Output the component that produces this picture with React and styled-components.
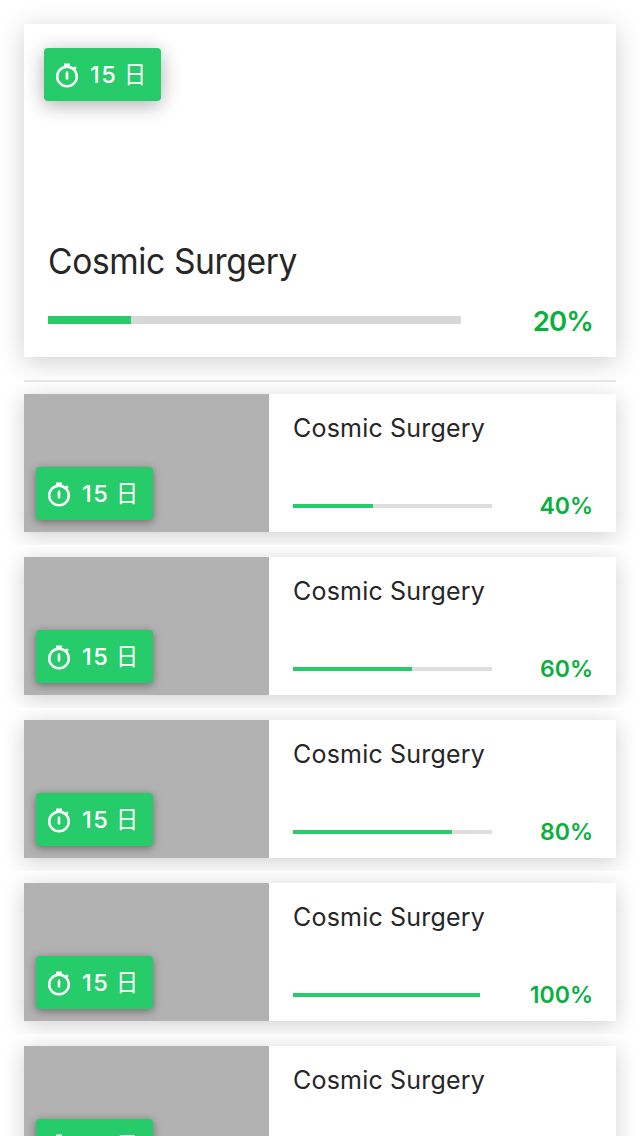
import React from "react";
import styled, { createGlobalStyle } from "styled-components";

const GlobalStyle = createGlobalStyle`
  * { box-sizing: border-box; }
  html, body { margin: 0; background: #fff; }
  body { font-family: Inter, "Noto Sans CJK SC", sans-serif; color: #262626; }
`;

const Screen = styled.main`
  width: 640px;
  height: 1136px;
  overflow: hidden;
  background: #fff;
`;

const Header = styled.header`
  height: 382px;
  padding: 24px 24px 0;
  display: flex;
  flex-direction: column;
  justify-content: space-between;
  overflow: hidden;
`;

const Divider = styled.div`
  height: 2px;
  background: #e6e6e6;
`;

const FeatureCard = styled.article`
  height: 333px;
  padding: 24px 24px 21px;
  display: flex;
  flex-direction: column;
  background: #fff;
  box-shadow: 0 5px 25px rgba(0, 0, 0, 0.19);
`;

const FeatureTitle = styled.h1`
  margin: auto 0 20px;
  font-size: 35.5px;
  line-height: 44px;
  font-weight: 400;
  letter-spacing: -0.4px;
  transform: scaleX(0.946);
  transform-origin: left;
`;

const Badge = styled.div`
  width: 117px;
  height: 53px;
  flex: none;
  display: flex;
  align-items: center;
  padding-left: 11px;
  margin-left: ${({ $featured }) => ($featured ? "-4px" : "0")};
  border-radius: 4px;
  background: #26cc69;
  color: #fff;
  box-shadow: ${({ $featured }) =>
    $featured ? "0 4px 20px rgba(0, 0, 0, 0.32)" : "0 2px 8px rgba(0, 0, 0, 0.4)"};
`;

const TimerIcon = styled.svg`
  width: 24px;
  height: 26px;
  flex: none;
  margin: 0 11px 0 0;
`;

const Remaining = styled.span`
  display: flex;
  align-items: center;
  gap: 6px;
  font-size: 23.5px;
  font-weight: 500;
  line-height: 28px;
  letter-spacing: 1.5px;
`;

const Day = styled.span`
  font-family: "Noto Sans CJK SC", sans-serif;
  font-size: 24px;
  font-weight: 400;
  line-height: 28px;
  padding-bottom: 4px;
  transform: scaleX(0.92);
`;

const ProgressRow = styled.div`
  display: flex;
  align-items: center;
  justify-content: space-between;
  height: 32px;
`;

const Track = styled.div`
  width: ${({ $width }) => $width}px;
  height: ${({ $featured }) => ($featured ? 8 : 4)}px;
  background: ${({ $featured }) => ($featured ? "#d8d8d8" : "#dedede")};
`;

const Fill = styled.div`
  height: 100%;
  background: #26cc69;
`;

const Percent = styled.span`
  color: #08b03e;
  font-size: ${({ $featured }) => ($featured ? 27.5 : 23)}px;
  font-weight: 600;
  line-height: 32px;
  letter-spacing: ${({ $featured }) => ($featured ? -0.9 : 0)}px;
  margin-right: -1px;
  padding-top: ${({ $featured }) => ($featured ? 1 : 0)}px;
`;

const Cell = styled.li`
  height: 163px;
  padding: 12px 24px 13px;
  background: #fff;
  overflow: hidden;
`;

const List = styled.ul`
  list-style: none;
  margin: 0;
  padding: 0;
`;

const Card = styled.article`
  height: 138px;
  display: flex;
  background: #fff;
  box-shadow: 0 4px 21px rgba(0, 0, 0, 0.19);
`;

const Thumb = styled.div`
  width: 245px;
  display: flex;
  align-items: flex-end;
  padding: 12px;
  background: #b2b2b2;
`;

const Details = styled.div`
  flex: 1;
  padding: 18px 24px 10px;
  display: flex;
  flex-direction: column;
  justify-content: space-between;
`;

const Title = styled.h2`
  margin: 0;
  font-size: 25px;
  line-height: 32px;
  font-weight: 400;
  letter-spacing: 0.2px;
`;

function DaysBadge({ featured }) {
  return (
    <Badge $featured={featured}>
      <TimerIcon viewBox="0 0 24 26" fill="none" stroke="#fff">
        <circle cx="12" cy="14.5" r="9.8" strokeWidth="2.5" />
        <path d="M9 1.5h6v3h-1v1h-4v-1h-1z" fill="#fff" stroke="none" />
        <path d="M19 5.2l1.8 1.8" strokeWidth="2.6" />
        <path d="M12 9l1.1 2.2v5.2q0 1-1.1 1t-1.1-1v-5.2z" fill="#fff" stroke="#fff" strokeWidth="0.4" />
      </TimerIcon>
      <Remaining>
        15 <Day>日</Day>
      </Remaining>
    </Badge>
  );
}

function Progress({ value, width, featured }) {
  return (
    <ProgressRow>
      <Track $width={width} $featured={featured}>
        <Fill style={{ width: `${value}%` }} />
      </Track>
      <Percent $featured={featured}>{value}%</Percent>
    </ProgressRow>
  );
}

const projects = [
  { value: 40, width: 199 },
  { value: 60, width: 199 },
  { value: 80, width: 199 },
  { value: 100, width: 187 },
  { value: 100, width: 187 },
];

export default function App() {
  return (
    <Screen>
      <GlobalStyle />
      <Header>
        <FeatureCard>
          <DaysBadge featured />
          <FeatureTitle>Cosmic Surgery</FeatureTitle>
          <Progress value={20} width={413} featured />
        </FeatureCard>
        <Divider />
      </Header>
      <List>
        {projects.map((project, index) => (
          <Cell key={index}>
            <Card>
              <Thumb>
                <DaysBadge />
              </Thumb>
              <Details>
                <Title>Cosmic Surgery</Title>
                <Progress value={project.value} width={project.width} />
              </Details>
            </Card>
          </Cell>
        ))}
      </List>
    </Screen>
  );
}
